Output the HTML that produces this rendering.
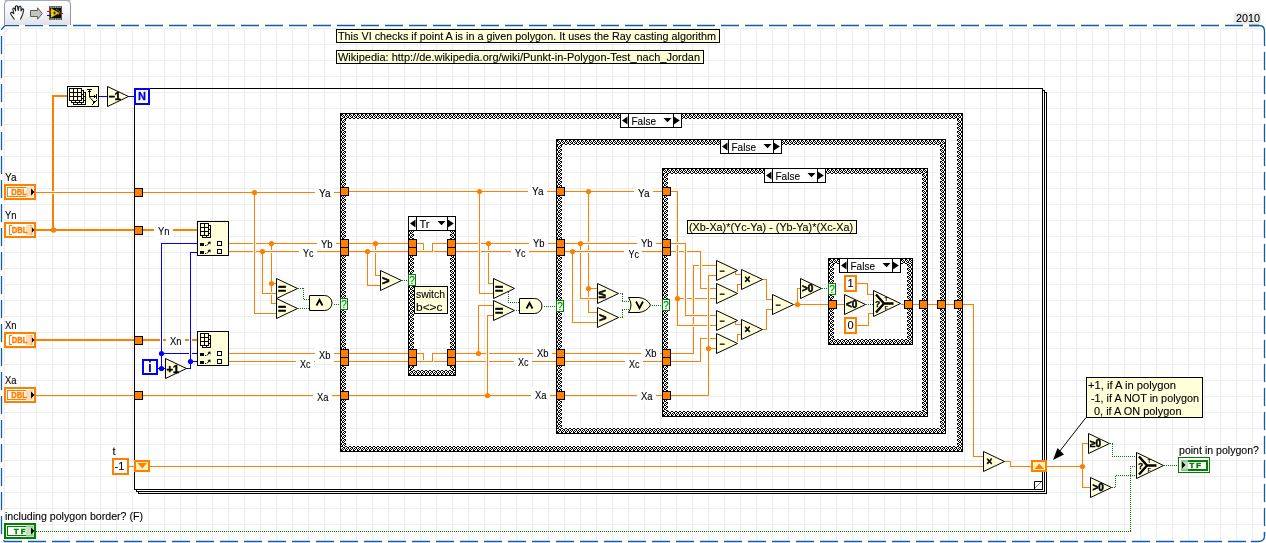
<!DOCTYPE html>
<html lang="en"><head><meta charset="utf-8"><title>Point in polygon - block diagram</title>
<style>html,body{margin:0;padding:0;background:#fff;overflow:hidden}svg{display:block;will-change:transform}</style></head>
<body>
<svg width="1266" height="543" viewBox="0 0 1266 543" shape-rendering="crispEdges" font-family="'Liberation Sans', sans-serif" style="display:block">
<defs>
<pattern id="grid" x="4" y="12" width="16" height="16" patternUnits="userSpaceOnUse"><rect x="0" y="0" width="1" height="16" fill="#ededed"/><rect x="0" y="0" width="16" height="1" fill="#ededed"/></pattern>
<pattern id="chk" x="0" y="0" width="4" height="4" patternUnits="userSpaceOnUse"><rect width="4" height="4" fill="#fff"/><rect x="0" y="0" width="1" height="1" fill="#000"/><rect x="2" y="0" width="1" height="1" fill="#000"/><rect x="1" y="1" width="1" height="1" fill="#000"/><rect x="3" y="1" width="1" height="1" fill="#000"/><rect x="0" y="2" width="1" height="1" fill="#000"/><rect x="2" y="2" width="1" height="1" fill="#000"/><rect x="1" y="3" width="1" height="1" fill="#000"/><rect x="3" y="3" width="1" height="1" fill="#000"/></pattern>
<pattern id="pt" x="0" y="0" width="4" height="5" patternUnits="userSpaceOnUse"><rect width="4" height="5" fill="#fff"/><rect x="0" y="0" width="1" height="1" fill="#000"/><rect x="1" y="0" width="1" height="1" fill="#000"/><rect x="0" y="1" width="1" height="1" fill="#000"/><rect x="2" y="1" width="1" height="1" fill="#000"/><rect x="1" y="2" width="1" height="1" fill="#000"/><rect x="3" y="2" width="1" height="1" fill="#000"/><rect x="2" y="3" width="1" height="1" fill="#000"/><rect x="3" y="3" width="1" height="1" fill="#000"/><rect x="0" y="4" width="1" height="1" fill="#000"/><rect x="1" y="4" width="1" height="1" fill="#000"/></pattern>
<pattern id="pb" x="0" y="0" width="4" height="5" patternUnits="userSpaceOnUse"><rect width="4" height="5" fill="#fff"/><rect x="0" y="0" width="1" height="1" fill="#000"/><rect x="1" y="0" width="1" height="1" fill="#000"/><rect x="2" y="1" width="1" height="1" fill="#000"/><rect x="3" y="1" width="1" height="1" fill="#000"/><rect x="1" y="2" width="1" height="1" fill="#000"/><rect x="3" y="2" width="1" height="1" fill="#000"/><rect x="0" y="3" width="1" height="1" fill="#000"/><rect x="2" y="3" width="1" height="1" fill="#000"/><rect x="0" y="4" width="1" height="1" fill="#000"/><rect x="1" y="4" width="1" height="1" fill="#000"/></pattern>
<pattern id="pl" x="0" y="0" width="5" height="4" patternUnits="userSpaceOnUse"><rect width="5" height="4" fill="#fff"/><rect x="0" y="0" width="1" height="1" fill="#000"/><rect x="3" y="0" width="1" height="1" fill="#000"/><rect x="4" y="0" width="1" height="1" fill="#000"/><rect x="0" y="1" width="1" height="1" fill="#000"/><rect x="2" y="1" width="1" height="1" fill="#000"/><rect x="4" y="1" width="1" height="1" fill="#000"/><rect x="1" y="2" width="1" height="1" fill="#000"/><rect x="3" y="2" width="1" height="1" fill="#000"/><rect x="1" y="3" width="1" height="1" fill="#000"/><rect x="2" y="3" width="1" height="1" fill="#000"/></pattern>
<pattern id="pr" x="0" y="0" width="5" height="4" patternUnits="userSpaceOnUse"><rect width="5" height="4" fill="#fff"/><rect x="0" y="0" width="1" height="1" fill="#000"/><rect x="1" y="0" width="1" height="1" fill="#000"/><rect x="4" y="0" width="1" height="1" fill="#000"/><rect x="0" y="1" width="1" height="1" fill="#000"/><rect x="2" y="1" width="1" height="1" fill="#000"/><rect x="4" y="1" width="1" height="1" fill="#000"/><rect x="1" y="2" width="1" height="1" fill="#000"/><rect x="3" y="2" width="1" height="1" fill="#000"/><rect x="2" y="3" width="1" height="1" fill="#000"/><rect x="3" y="3" width="1" height="1" fill="#000"/></pattern>
<linearGradient id="tb" x1="0" y1="0" x2="0" y2="1"><stop offset="0" stop-color="#ffffff"/><stop offset="0.5" stop-color="#f6f6f8"/><stop offset="1" stop-color="#dfe1e6"/></linearGradient>
</defs>
<rect x="0" y="0" width="1266" height="543" fill="#fff"/>
<path d="M8,28 H1258 Q1262,28 1262,32 V536 Q1262,540 1258,540 H8 Q4,540 4,536 V32 Z" fill="url(#grid)"/>
<polygon points="4,28 9.5,28 4,33.5" fill="#ececec" shape-rendering="auto"/>
<g stroke="#115da8" stroke-width="1.3" fill="none" shape-rendering="auto">
<path d="M5,25.5 H1259" stroke-dasharray="18,6" stroke-dashoffset="4"/>
<path d="M1.5,36 V535" stroke-dasharray="18,6"/>
<path d="M5,25.5 L1.2,29.8"/>
<path d="M1264.5,52 V536" stroke-dasharray="18,6"/>
<path d="M1249,25.5 H1259 Q1264.5,25.5 1264.5,31 V46"/>
<path d="M4,541.5 H1250" stroke-dasharray="18,6" stroke-dashoffset="0"/>
<path d="M3.4,540.2 L4.8,541.6"/>
<path d="M1264.5,532 V536 Q1264.5,541.5 1258,541.5 H1251"/>
</g>
<g shape-rendering="auto">
<path d="M4.5,25 V5 Q4.5,0.5 9,0.5 H66 Q70.5,0.5 70.5,5 V25" fill="url(#tb)" stroke="#8e98ad" stroke-width="1"/>
<path d="M5,1.2 Q5.5,0 9,0 H66 Q69.5,0 70,1.2" fill="none" stroke="#a9b2c6" stroke-width="1.6"/>
<path d="M14.5,19.5 L11,14.5 Q10,12.6 11.6,12.2 L13.8,13.6 L12.8,9 Q13.4,7.2 14.8,8.6 L15.6,11 L15.4,6.6 Q16.4,5 17.6,6.4 L18.2,10.4 L19,6.6 Q20.2,5.6 21,7 L21,11 L22.4,8.8 Q23.8,8.6 23.6,10.4 L22.6,14.4 L20.4,19.5" fill="#fff" stroke="#1a1a1a" stroke-width="1.1" stroke-linejoin="round"/>
<path d="M30.5,10.5 H37.5 V7.8 L42.3,13.5 L37.5,19.2 V16.5 H30.5 Z" fill="#c4c4c4" stroke="#5a5a5a" stroke-width="1"/>
<rect x="49" y="6" width="13" height="14" fill="#555"/>
<rect x="50" y="8" width="11" height="10" fill="#0a0a0a"/>
<rect x="50.3" y="6.6" width="1.2" height="1" fill="#ddd"/><rect x="50.3" y="18.6" width="1.2" height="1" fill="#ddd"/>
<rect x="52.599999999999994" y="6.6" width="1.2" height="1" fill="#ddd"/><rect x="52.599999999999994" y="18.6" width="1.2" height="1" fill="#ddd"/>
<rect x="54.9" y="6.6" width="1.2" height="1" fill="#ddd"/><rect x="54.9" y="18.6" width="1.2" height="1" fill="#ddd"/>
<rect x="57.199999999999996" y="6.6" width="1.2" height="1" fill="#ddd"/><rect x="57.199999999999996" y="18.6" width="1.2" height="1" fill="#ddd"/>
<rect x="59.5" y="6.6" width="1.2" height="1" fill="#ddd"/><rect x="59.5" y="18.6" width="1.2" height="1" fill="#ddd"/>
<path d="M56,9 L60,12 L58,15" fill="none" stroke="#1b9a1b" stroke-width="1"/>
<polygon points="51,8.6 51,17.4 59,13" fill="#f5d312" stroke="#c9a500" stroke-width="0.6"/>
<rect x="47" y="11" width="4" height="1" fill="#f00"/><rect x="47" y="15" width="4" height="1" fill="#00f"/><rect x="59" y="13" width="4" height="1" fill="#f00"/>
<path d="M54.5,11.5 V14.5 M53,13 H56" stroke="#333" stroke-width="1"/>
</g>
<rect x="1234" y="12" width="27" height="12" rx="2.5" fill="#ececec" shape-rendering="auto"/>
<text x="1236" y="21.8" font-size="11" fill="#000" font-weight="normal" text-anchor="start" textLength="24" lengthAdjust="spacingAndGlyphs"  stroke="#000" stroke-width="0.1">2010</text>
<rect x="336.5" y="29.5" width="383" height="13" fill="#ffffda" stroke="#000" stroke-width="1"/>
<text x="338" y="40" font-size="11" fill="#000" font-weight="normal" text-anchor="start" textLength="378" lengthAdjust="spacingAndGlyphs"  stroke="#000" stroke-width="0.1">This VI checks if point A is in a given polygon. It uses the Ray casting algorithm</text>
<rect x="336.5" y="50.5" width="367" height="13" fill="#ffffda" stroke="#000" stroke-width="1"/>
<text x="338" y="61" font-size="11" fill="#000" font-weight="normal" text-anchor="start" textLength="362" lengthAdjust="spacingAndGlyphs"  stroke="#000" stroke-width="0.1">Wikipedia: http://de.wikipedia.org/wiki/Punkt-in-Polygon-Test_nach_Jordan</text>
<rect x="134" y="88" width="909" height="1" fill="#000" />
<rect x="134" y="88" width="1" height="402" fill="#000" />
<rect x="134" y="489" width="909" height="1" fill="#000" />
<rect x="1042" y="88" width="1" height="402" fill="#000" />
<rect x="136" y="491" width="909" height="1" fill="#000" />
<rect x="1044" y="90" width="1" height="402" fill="#000" />
<rect x="138" y="493" width="909" height="1" fill="#000" />
<rect x="1046" y="92" width="1" height="402" fill="#000" />
<rect x="1043" y="90" width="1" height="1" fill="#000" />
<rect x="1045" y="92" width="1" height="1" fill="#000" />
<rect x="136" y="490" width="1" height="1" fill="#000" />
<rect x="138" y="492" width="1" height="1" fill="#000" />
<polygon points="1034.5,489 1034.5,481.5 1042,481.5" fill="#fff" stroke="#000" stroke-width="1" shape-rendering="auto"/>
<polygon points="1034.5,489 1042,481.5 1042,489" fill="#fff" stroke="none"/>
<g transform="translate(341,114)"><rect x="0" y="0" width="621" height="5" fill="url(#pt)"/></g>
<g transform="translate(341,446)"><rect x="0" y="0" width="621" height="5" fill="url(#pb)"/></g>
<g transform="translate(341,119)"><rect x="0" y="0" width="5" height="327" fill="url(#pl)"/></g>
<g transform="translate(957,119)"><rect x="0" y="0" width="5" height="327" fill="url(#pr)"/></g>
<rect x="340" y="113" width="623" height="1" fill="#000" />
<rect x="340" y="451" width="623" height="1" fill="#000" />
<rect x="340" y="113" width="1" height="339" fill="#000" />
<rect x="962" y="113" width="1" height="339" fill="#000" />
<rect x="620.5" y="113.5" width="61" height="14" fill="#fff" stroke="#000" stroke-width="1"/>
<rect x="628" y="113" width="1" height="15" fill="#000" />
<rect x="673" y="113" width="1" height="15" fill="#000" />
<polygon points="627.5,116.5 627.5,124.5 622,120.5" fill="#000" shape-rendering="auto"/>
<polygon points="673.8,116.5 673.8,124.5 679.8,120.5" fill="#000" shape-rendering="auto"/>
<polygon points="663.5,118.0 671.5,118.0 667.5,122.3" fill="#000" shape-rendering="auto"/>
<text x="631.5" y="124.5" font-size="11" fill="#000" font-weight="normal" text-anchor="start" textLength="24.5" lengthAdjust="spacingAndGlyphs"  stroke="#000" stroke-width="0.1">False</text>
<g transform="translate(557,140)"><rect x="0" y="0" width="388" height="5" fill="url(#pt)"/></g>
<g transform="translate(557,428)"><rect x="0" y="0" width="388" height="5" fill="url(#pb)"/></g>
<g transform="translate(557,145)"><rect x="0" y="0" width="5" height="283" fill="url(#pl)"/></g>
<g transform="translate(940,145)"><rect x="0" y="0" width="5" height="283" fill="url(#pr)"/></g>
<rect x="556" y="139" width="390" height="1" fill="#000" />
<rect x="556" y="433" width="390" height="1" fill="#000" />
<rect x="556" y="139" width="1" height="295" fill="#000" />
<rect x="945" y="139" width="1" height="295" fill="#000" />
<rect x="720.5" y="139.5" width="61" height="14" fill="#fff" stroke="#000" stroke-width="1"/>
<rect x="728" y="139" width="1" height="15" fill="#000" />
<rect x="773" y="139" width="1" height="15" fill="#000" />
<polygon points="727.5,142.5 727.5,150.5 722,146.5" fill="#000" shape-rendering="auto"/>
<polygon points="773.8,142.5 773.8,150.5 779.8,146.5" fill="#000" shape-rendering="auto"/>
<polygon points="763.5,144.0 771.5,144.0 767.5,148.3" fill="#000" shape-rendering="auto"/>
<text x="731.5" y="150.5" font-size="11" fill="#000" font-weight="normal" text-anchor="start" textLength="24.5" lengthAdjust="spacingAndGlyphs"  stroke="#000" stroke-width="0.1">False</text>
<g transform="translate(663,169)"><rect x="0" y="0" width="264" height="5" fill="url(#pt)"/></g>
<g transform="translate(663,411)"><rect x="0" y="0" width="264" height="5" fill="url(#pb)"/></g>
<g transform="translate(663,174)"><rect x="0" y="0" width="5" height="237" fill="url(#pl)"/></g>
<g transform="translate(922,174)"><rect x="0" y="0" width="5" height="237" fill="url(#pr)"/></g>
<rect x="662" y="168" width="266" height="1" fill="#000" />
<rect x="662" y="416" width="266" height="1" fill="#000" />
<rect x="662" y="168" width="1" height="249" fill="#000" />
<rect x="927" y="168" width="1" height="249" fill="#000" />
<rect x="764.5" y="168.5" width="61" height="14" fill="#fff" stroke="#000" stroke-width="1"/>
<rect x="772" y="168" width="1" height="15" fill="#000" />
<rect x="817" y="168" width="1" height="15" fill="#000" />
<polygon points="771.5,171.5 771.5,179.5 766,175.5" fill="#000" shape-rendering="auto"/>
<polygon points="817.8,171.5 817.8,179.5 823.8,175.5" fill="#000" shape-rendering="auto"/>
<polygon points="807.5,173.0 815.5,173.0 811.5,177.3" fill="#000" shape-rendering="auto"/>
<text x="775.5" y="179.5" font-size="11" fill="#000" font-weight="normal" text-anchor="start" textLength="24.5" lengthAdjust="spacingAndGlyphs"  stroke="#000" stroke-width="0.1">False</text>
<g transform="translate(829,259)"><rect x="0" y="0" width="83" height="5" fill="url(#pt)"/></g>
<g transform="translate(829,339)"><rect x="0" y="0" width="83" height="5" fill="url(#pb)"/></g>
<g transform="translate(829,264)"><rect x="0" y="0" width="5" height="75" fill="url(#pl)"/></g>
<g transform="translate(907,264)"><rect x="0" y="0" width="5" height="75" fill="url(#pr)"/></g>
<rect x="828" y="258" width="85" height="1" fill="#000" />
<rect x="828" y="344" width="85" height="1" fill="#000" />
<rect x="828" y="258" width="1" height="87" fill="#000" />
<rect x="912" y="258" width="1" height="87" fill="#000" />
<rect x="839.5" y="258.5" width="61" height="14" fill="#fff" stroke="#000" stroke-width="1"/>
<rect x="847" y="258" width="1" height="15" fill="#000" />
<rect x="892" y="258" width="1" height="15" fill="#000" />
<polygon points="846.5,261.5 846.5,269.5 841,265.5" fill="#000" shape-rendering="auto"/>
<polygon points="892.8,261.5 892.8,269.5 898.8,265.5" fill="#000" shape-rendering="auto"/>
<polygon points="882.5,263.0 890.5,263.0 886.5,267.3" fill="#000" shape-rendering="auto"/>
<text x="850.5" y="269.5" font-size="11" fill="#000" font-weight="normal" text-anchor="start" textLength="24.5" lengthAdjust="spacingAndGlyphs"  stroke="#000" stroke-width="0.1">False</text>
<g transform="translate(409,217)"><rect x="0" y="0" width="46" height="5" fill="url(#pt)"/></g>
<g transform="translate(409,370)"><rect x="0" y="0" width="46" height="5" fill="url(#pb)"/></g>
<g transform="translate(409,222)"><rect x="0" y="0" width="5" height="148" fill="url(#pl)"/></g>
<g transform="translate(450,222)"><rect x="0" y="0" width="5" height="148" fill="url(#pr)"/></g>
<rect x="408" y="216" width="48" height="1" fill="#000" />
<rect x="408" y="375" width="48" height="1" fill="#000" />
<rect x="408" y="216" width="1" height="160" fill="#000" />
<rect x="455" y="216" width="1" height="160" fill="#000" />
<rect x="408.5" y="216.5" width="47" height="14" fill="#fff" stroke="#000" stroke-width="1"/>
<rect x="416" y="216" width="1" height="15" fill="#000" />
<rect x="447" y="216" width="1" height="15" fill="#000" />
<polygon points="415.5,219.5 415.5,227.5 410,223.5" fill="#000" shape-rendering="auto"/>
<polygon points="447.8,219.5 447.8,227.5 453.8,223.5" fill="#000" shape-rendering="auto"/>
<polygon points="437.5,221.0 445.5,221.0 441.5,225.3" fill="#000" shape-rendering="auto"/>
<text x="419.5" y="227.5" font-size="11" fill="#000" font-weight="normal" text-anchor="start"  stroke="#000" stroke-width="0.1">Tr</text>
<rect x="36" y="229" width="98" height="2" fill="#ff8000" />
<rect x="52" y="96" width="2" height="135" fill="#ff8000" />
<rect x="52" y="95" width="15" height="2" fill="#ff8000" />
<rect x="52" y="191" width="2" height="3" fill="#fff" />
<rect x="36" y="192" width="98" height="1" fill="#ff8000" />
<circle cx="53.5" cy="230.0" r="2.8" fill="#ff8000" shape-rendering="auto"/>
<rect x="99" y="96" width="8" height="1" fill="#0000ff" />
<rect x="128" y="96" width="6" height="1" fill="#0000ff" />
<rect x="36" y="339" width="98" height="2" fill="#ff8000" />
<rect x="36" y="395" width="98" height="1" fill="#ff8000" />
<rect x="129" y="466" width="5" height="1" fill="#ff8000" />
<line x1="36" y1="531.5" x2="1131" y2="531.5" stroke="#008000" stroke-width="1" stroke-dasharray="1,1"/>
<line x1="1130.5" y1="466" x2="1130.5" y2="532" stroke="#008000" stroke-width="1" stroke-dasharray="1,1"/>
<line x1="1130" y1="466.5" x2="1136" y2="466.5" stroke="#008000" stroke-width="1" stroke-dasharray="1,1"/>
<rect x="143" y="192" width="197" height="1" fill="#ff8000" />
<rect x="143" y="229" width="54" height="2" fill="#ff8000" />
<rect x="229" y="243" width="111" height="1" fill="#ff8000" />
<rect x="229" y="251" width="111" height="1" fill="#ff8000" />
<rect x="229" y="353" width="111" height="1" fill="#ff8000" />
<rect x="229" y="361" width="111" height="1" fill="#ff8000" />
<rect x="143" y="395" width="197" height="1" fill="#ff8000" />
<rect x="143" y="339" width="17" height="2" fill="#ff8000" />
<rect x="163" y="339" width="4" height="2" fill="#ff8000" />
<rect x="185" y="339" width="4" height="2" fill="#ff8000" />
<rect x="192" y="339" width="5" height="2" fill="#ff8000" />
<rect x="254" y="192" width="1" height="122" fill="#ff8000" />
<rect x="254" y="313" width="22" height="1" fill="#ff8000" />
<circle cx="254.5" cy="192.5" r="2.6" fill="#ff8000" shape-rendering="auto"/>
<rect x="271" y="243" width="1" height="61" fill="#ff8000" />
<rect x="271" y="303" width="5" height="1" fill="#ff8000" />
<rect x="271" y="283" width="5" height="1" fill="#ff8000" />
<circle cx="271.5" cy="243.5" r="2.6" fill="#ff8000" shape-rendering="auto"/>
<circle cx="271.5" cy="283.5" r="2.6" fill="#ff8000" shape-rendering="auto"/>
<rect x="262" y="251" width="1" height="43" fill="#ff8000" />
<rect x="262" y="293" width="14" height="1" fill="#ff8000" />
<circle cx="262.5" cy="251.5" r="2.6" fill="#ff8000" shape-rendering="auto"/>
<rect x="161" y="243" width="1" height="126" fill="#0000ff" />
<rect x="161" y="243" width="36" height="1" fill="#0000ff" />
<rect x="158" y="368" width="7" height="1" fill="#0000ff" />
<rect x="161" y="353" width="28" height="1" fill="#0000ff" />
<rect x="192" y="353" width="5" height="1" fill="#0000ff" />
<rect x="190" y="252" width="1" height="117" fill="#0000ff" />
<rect x="186" y="368" width="5" height="1" fill="#0000ff" />
<rect x="190" y="252" width="7" height="1" fill="#0000ff" />
<rect x="190" y="361" width="7" height="1" fill="#0000ff" />
<circle cx="161.5" cy="353.5" r="2.6" fill="#0000ff" shape-rendering="auto"/>
<circle cx="161.5" cy="368.5" r="2.6" fill="#0000ff" shape-rendering="auto"/>
<circle cx="190.5" cy="361.5" r="2.6" fill="#0000ff" shape-rendering="auto"/>
<rect x="150" y="466" width="833" height="1" fill="#ff8000" />
<rect x="349" y="191" width="207" height="1" fill="#ff8000" />
<rect x="479" y="191" width="1" height="103" fill="#ff8000" />
<rect x="479" y="293" width="14" height="1" fill="#ff8000" />
<circle cx="479.5" cy="191.5" r="2.6" fill="#ff8000" shape-rendering="auto"/>
<rect x="349" y="243" width="59" height="1" fill="#ff8000" />
<rect x="349" y="251" width="59" height="1" fill="#ff8000" />
<rect x="375" y="243" width="1" height="33" fill="#ff8000" />
<rect x="375" y="275" width="5" height="1" fill="#ff8000" />
<circle cx="375.5" cy="243.5" r="2.6" fill="#ff8000" shape-rendering="auto"/>
<rect x="367" y="251" width="1" height="35" fill="#ff8000" />
<rect x="367" y="285" width="13" height="1" fill="#ff8000" />
<circle cx="367.5" cy="251.5" r="2.6" fill="#ff8000" shape-rendering="auto"/>
<rect x="417" y="243" width="7" height="1" fill="#ff8000" />
<rect x="423" y="243" width="1" height="7" fill="#ff8000" />
<rect x="434" y="251" width="13" height="1" fill="#ff8000" />
<rect x="417" y="251" width="16" height="1" fill="#ff8000" />
<rect x="432" y="243" width="1" height="9" fill="#ff8000" />
<rect x="432" y="243" width="15" height="1" fill="#ff8000" />
<rect x="417" y="353" width="7" height="1" fill="#ff8000" />
<rect x="423" y="353" width="1" height="7" fill="#ff8000" />
<rect x="434" y="361" width="13" height="1" fill="#ff8000" />
<rect x="417" y="361" width="16" height="1" fill="#ff8000" />
<rect x="432" y="353" width="1" height="9" fill="#ff8000" />
<rect x="432" y="353" width="15" height="1" fill="#ff8000" />
<rect x="456" y="243" width="100" height="1" fill="#ff8000" />
<rect x="456" y="251" width="100" height="1" fill="#ff8000" />
<rect x="488" y="243" width="1" height="41" fill="#ff8000" />
<rect x="488" y="283" width="5" height="1" fill="#ff8000" />
<circle cx="488.5" cy="243.5" r="2.6" fill="#ff8000" shape-rendering="auto"/>
<rect x="349" y="353" width="59" height="1" fill="#ff8000" />
<rect x="349" y="361" width="59" height="1" fill="#ff8000" />
<rect x="456" y="353" width="100" height="1" fill="#ff8000" />
<rect x="456" y="361" width="100" height="1" fill="#ff8000" />
<rect x="478" y="305" width="1" height="49" fill="#ff8000" />
<rect x="478" y="305" width="15" height="1" fill="#ff8000" />
<circle cx="478.5" cy="353.5" r="2.6" fill="#ff8000" shape-rendering="auto"/>
<rect x="349" y="395" width="207" height="1" fill="#ff8000" />
<rect x="487" y="315" width="1" height="81" fill="#ff8000" />
<rect x="487" y="315" width="6" height="1" fill="#ff8000" />
<circle cx="487.5" cy="395.5" r="2.6" fill="#ff8000" shape-rendering="auto"/>
<rect x="565" y="191" width="97" height="1" fill="#ff8000" />
<rect x="588" y="191" width="1" height="122" fill="#ff8000" />
<rect x="588" y="312" width="9" height="1" fill="#ff8000" />
<rect x="588" y="288" width="9" height="1" fill="#ff8000" />
<circle cx="588.5" cy="191.5" r="2.6" fill="#ff8000" shape-rendering="auto"/>
<circle cx="588.5" cy="288.5" r="2.6" fill="#ff8000" shape-rendering="auto"/>
<rect x="565" y="243" width="97" height="1" fill="#ff8000" />
<rect x="565" y="251" width="97" height="1" fill="#ff8000" />
<rect x="580" y="243" width="1" height="56" fill="#ff8000" />
<rect x="580" y="298" width="17" height="1" fill="#ff8000" />
<circle cx="580.5" cy="243.5" r="2.6" fill="#ff8000" shape-rendering="auto"/>
<rect x="572" y="251" width="1" height="72" fill="#ff8000" />
<rect x="572" y="322" width="25" height="1" fill="#ff8000" />
<circle cx="572.5" cy="251.5" r="2.6" fill="#ff8000" shape-rendering="auto"/>
<rect x="565" y="353" width="97" height="1" fill="#ff8000" />
<rect x="565" y="361" width="97" height="1" fill="#ff8000" />
<rect x="565" y="395" width="97" height="1" fill="#ff8000" />
<rect x="671" y="191" width="7" height="1" fill="#ff8000" />
<rect x="677" y="191" width="1" height="135" fill="#ff8000" />
<rect x="677" y="325" width="39" height="1" fill="#ff8000" />
<rect x="677" y="298" width="39" height="1" fill="#ff8000" />
<circle cx="677.5" cy="298.5" r="2.6" fill="#ff8000" shape-rendering="auto"/>
<rect x="671" y="243" width="15" height="1" fill="#ff8000" />
<rect x="685" y="243" width="1" height="73" fill="#ff8000" />
<rect x="685" y="315" width="31" height="1" fill="#ff8000" />
<rect x="671" y="251" width="30" height="1" fill="#ff8000" />
<rect x="700" y="251" width="1" height="38" fill="#ff8000" />
<rect x="700" y="288" width="16" height="1" fill="#ff8000" />
<rect x="671" y="353" width="23" height="1" fill="#ff8000" />
<rect x="693" y="265" width="1" height="89" fill="#ff8000" />
<rect x="693" y="265" width="23" height="1" fill="#ff8000" />
<rect x="671" y="361" width="30" height="1" fill="#ff8000" />
<rect x="700" y="338" width="1" height="24" fill="#ff8000" />
<rect x="700" y="338" width="16" height="1" fill="#ff8000" />
<rect x="671" y="395" width="38" height="1" fill="#ff8000" />
<rect x="708" y="275" width="1" height="121" fill="#ff8000" />
<rect x="708" y="275" width="8" height="1" fill="#ff8000" />
<rect x="708" y="348" width="8" height="1" fill="#ff8000" />
<circle cx="708.5" cy="348.5" r="2.6" fill="#ff8000" shape-rendering="auto"/>
<rect x="735" y="271" width="1" height="4" fill="#ff8000" />
<rect x="735" y="274" width="6" height="1" fill="#ff8000" />
<rect x="737" y="284" width="1" height="8" fill="#ff8000" />
<rect x="737" y="284" width="4" height="1" fill="#ff8000" />
<rect x="735" y="322" width="1" height="3" fill="#ff8000" />
<rect x="735" y="324" width="6" height="1" fill="#ff8000" />
<rect x="737" y="334" width="1" height="8" fill="#ff8000" />
<rect x="737" y="334" width="4" height="1" fill="#ff8000" />
<rect x="763" y="279" width="4" height="1" fill="#ff8000" />
<rect x="766" y="279" width="1" height="21" fill="#ff8000" />
<rect x="766" y="299" width="6" height="1" fill="#ff8000" />
<rect x="763" y="329" width="4" height="1" fill="#ff8000" />
<rect x="766" y="309" width="1" height="21" fill="#ff8000" />
<rect x="766" y="309" width="6" height="1" fill="#ff8000" />
<rect x="794" y="304" width="35" height="1" fill="#ff8000" />
<rect x="797" y="288" width="1" height="17" fill="#ff8000" />
<rect x="797" y="288" width="3" height="1" fill="#ff8000" />
<circle cx="797.5" cy="304.5" r="2.6" fill="#ff8000" shape-rendering="auto"/>
<line x1="822" y1="288.5" x2="828" y2="288.5" stroke="#008000" stroke-width="1" stroke-dasharray="1,1"/>
<rect x="837" y="304" width="7" height="1" fill="#ff8000" />
<line x1="866" y1="304.5" x2="873" y2="304.5" stroke="#008000" stroke-width="1" stroke-dasharray="1,1"/>
<rect x="857" y="283" width="11" height="1" fill="#ff8000" />
<rect x="867" y="283" width="1" height="12" fill="#ff8000" />
<rect x="867" y="294" width="6" height="1" fill="#ff8000" />
<rect x="857" y="325" width="12" height="1" fill="#ff8000" />
<rect x="868" y="313" width="1" height="13" fill="#ff8000" />
<rect x="868" y="313" width="5" height="1" fill="#ff8000" />
<rect x="901" y="304" width="3" height="1" fill="#ff8000" />
<rect x="913" y="304" width="61" height="1" fill="#ff8000" />
<rect x="973" y="304" width="1" height="153" fill="#ff8000" />
<rect x="973" y="456" width="10" height="1" fill="#ff8000" />
<rect x="1005" y="461" width="6" height="1" fill="#ff8000" />
<rect x="1010" y="461" width="1" height="6" fill="#ff8000" />
<rect x="1010" y="466" width="21" height="1" fill="#ff8000" />
<rect x="1047" y="466" width="36" height="1" fill="#ff8000" />
<rect x="1082" y="443" width="6" height="1" fill="#ff8000" />
<rect x="1082" y="443" width="1" height="45" fill="#ff8000" />
<rect x="1082" y="487" width="8" height="1" fill="#ff8000" />
<circle cx="1082.5" cy="466.5" r="2.6" fill="#ff8000" shape-rendering="auto"/>
<line x1="1110" y1="443.5" x2="1113" y2="443.5" stroke="#008000" stroke-width="1" stroke-dasharray="1,1"/>
<line x1="1112.5" y1="444" x2="1112.5" y2="457" stroke="#008000" stroke-width="1" stroke-dasharray="1,1"/>
<line x1="1112" y1="456.5" x2="1136" y2="456.5" stroke="#008000" stroke-width="1" stroke-dasharray="1,1"/>
<line x1="1112" y1="487.5" x2="1116" y2="487.5" stroke="#008000" stroke-width="1" stroke-dasharray="1,1"/>
<line x1="1115.5" y1="476" x2="1115.5" y2="488" stroke="#008000" stroke-width="1" stroke-dasharray="1,1"/>
<line x1="1116" y1="475.5" x2="1136" y2="475.5" stroke="#008000" stroke-width="1" stroke-dasharray="1,1"/>
<line x1="1164" y1="465.5" x2="1178" y2="465.5" stroke="#008000" stroke-width="1" stroke-dasharray="1,1"/>
<line x1="298" y1="288.5" x2="304" y2="288.5" stroke="#008000" stroke-width="1" stroke-dasharray="1,1"/>
<line x1="303.5" y1="288" x2="303.5" y2="300" stroke="#008000" stroke-width="1" stroke-dasharray="1,1"/>
<line x1="304" y1="299.5" x2="309" y2="299.5" stroke="#008000" stroke-width="1" stroke-dasharray="1,1"/>
<line x1="298" y1="308.5" x2="309" y2="308.5" stroke="#008000" stroke-width="1" stroke-dasharray="1,1"/>
<line x1="334" y1="304.5" x2="340" y2="304.5" stroke="#008000" stroke-width="1" stroke-dasharray="1,1"/>
<line x1="402" y1="280.5" x2="408" y2="280.5" stroke="#008000" stroke-width="1" stroke-dasharray="1,1"/>
<line x1="508.5" y1="292" x2="508.5" y2="303" stroke="#008000" stroke-width="1" stroke-dasharray="1,1"/>
<line x1="508" y1="302.5" x2="519" y2="302.5" stroke="#008000" stroke-width="1" stroke-dasharray="1,1"/>
<line x1="516" y1="310.5" x2="519" y2="310.5" stroke="#008000" stroke-width="1" stroke-dasharray="1,1"/>
<line x1="544" y1="306.5" x2="556" y2="306.5" stroke="#008000" stroke-width="1" stroke-dasharray="1,1"/>
<line x1="620" y1="293.5" x2="623" y2="293.5" stroke="#008000" stroke-width="1" stroke-dasharray="1,1"/>
<line x1="622.5" y1="294" x2="622.5" y2="302" stroke="#008000" stroke-width="1" stroke-dasharray="1,1"/>
<line x1="622" y1="301.5" x2="632" y2="301.5" stroke="#008000" stroke-width="1" stroke-dasharray="1,1"/>
<line x1="620" y1="317.5" x2="623" y2="317.5" stroke="#008000" stroke-width="1" stroke-dasharray="1,1"/>
<line x1="622.5" y1="310" x2="622.5" y2="318" stroke="#008000" stroke-width="1" stroke-dasharray="1,1"/>
<line x1="622" y1="309.5" x2="632" y2="309.5" stroke="#008000" stroke-width="1" stroke-dasharray="1,1"/>
<line x1="652" y1="305.5" x2="662" y2="305.5" stroke="#008000" stroke-width="1" stroke-dasharray="1,1"/>
<rect x="271" y="250" width="1" height="1" fill="#fff" />
<rect x="271" y="252" width="1" height="1" fill="#fff" />
<rect x="271" y="292" width="1" height="1" fill="#fff" />
<rect x="271" y="294" width="1" height="1" fill="#fff" />
<rect x="488" y="250" width="1" height="1" fill="#fff" />
<rect x="488" y="252" width="1" height="1" fill="#fff" />
<rect x="375" y="250" width="1" height="1" fill="#fff" />
<rect x="375" y="252" width="1" height="1" fill="#fff" />
<rect x="588" y="242" width="1" height="1" fill="#fff" />
<rect x="588" y="244" width="1" height="1" fill="#fff" />
<rect x="588" y="250" width="1" height="1" fill="#fff" />
<rect x="588" y="252" width="1" height="1" fill="#fff" />
<rect x="580" y="250" width="1" height="1" fill="#fff" />
<rect x="580" y="252" width="1" height="1" fill="#fff" />
<rect x="588" y="297" width="1" height="1" fill="#fff" />
<rect x="588" y="299" width="1" height="1" fill="#fff" />
<rect x="677" y="242" width="1" height="1" fill="#fff" />
<rect x="677" y="244" width="1" height="1" fill="#fff" />
<rect x="693" y="314" width="1" height="1" fill="#fff" />
<rect x="693" y="316" width="1" height="1" fill="#fff" />
<rect x="693" y="324" width="1" height="1" fill="#fff" />
<rect x="693" y="326" width="1" height="1" fill="#fff" />
<rect x="253" y="243" width="1" height="1" fill="#fff" />
<rect x="255" y="243" width="1" height="1" fill="#fff" />
<rect x="253" y="251" width="1" height="1" fill="#fff" />
<rect x="255" y="251" width="1" height="1" fill="#fff" />
<rect x="478" y="243" width="1" height="1" fill="#fff" />
<rect x="480" y="243" width="1" height="1" fill="#fff" />
<rect x="478" y="251" width="1" height="1" fill="#fff" />
<rect x="480" y="251" width="1" height="1" fill="#fff" />
<rect x="486" y="353" width="1" height="1" fill="#fff" />
<rect x="488" y="353" width="1" height="1" fill="#fff" />
<rect x="486" y="361" width="1" height="1" fill="#fff" />
<rect x="488" y="361" width="1" height="1" fill="#fff" />
<rect x="676" y="251" width="1" height="1" fill="#fff" />
<rect x="678" y="251" width="1" height="1" fill="#fff" />
<rect x="684" y="251" width="1" height="1" fill="#fff" />
<rect x="686" y="251" width="1" height="1" fill="#fff" />
<rect x="699" y="265" width="1" height="1" fill="#fff" />
<rect x="701" y="265" width="1" height="1" fill="#fff" />
<rect x="707" y="288" width="1" height="1" fill="#fff" />
<rect x="709" y="288" width="1" height="1" fill="#fff" />
<rect x="684" y="298" width="1" height="1" fill="#fff" />
<rect x="686" y="298" width="1" height="1" fill="#fff" />
<rect x="692" y="298" width="1" height="1" fill="#fff" />
<rect x="694" y="298" width="1" height="1" fill="#fff" />
<rect x="707" y="298" width="1" height="1" fill="#fff" />
<rect x="709" y="298" width="1" height="1" fill="#fff" />
<rect x="707" y="315" width="1" height="1" fill="#fff" />
<rect x="709" y="315" width="1" height="1" fill="#fff" />
<rect x="707" y="325" width="1" height="1" fill="#fff" />
<rect x="709" y="325" width="1" height="1" fill="#fff" />
<rect x="707" y="338" width="1" height="1" fill="#fff" />
<rect x="709" y="338" width="1" height="1" fill="#fff" />
<rect x="315" y="186" width="19" height="14" fill="#fff" />
<text x="319" y="197" font-size="11" fill="#000" font-weight="normal" text-anchor="start" textLength="11.5" lengthAdjust="spacingAndGlyphs"  stroke="#000" stroke-width="0.1">Ya</text>
<rect x="154" y="224" width="19" height="14" fill="#fff" />
<text x="158" y="235" font-size="11" fill="#000" font-weight="normal" text-anchor="start" textLength="11.5" lengthAdjust="spacingAndGlyphs"  stroke="#000" stroke-width="0.1">Yn</text>
<rect x="317" y="237" width="19" height="14" fill="#fff" />
<text x="321" y="248" font-size="11" fill="#000" font-weight="normal" text-anchor="start" textLength="11.5" lengthAdjust="spacingAndGlyphs"  stroke="#000" stroke-width="0.1">Yb</text>
<rect x="299" y="246" width="18" height="14" fill="#fff" />
<text x="303" y="257" font-size="11" fill="#000" font-weight="normal" text-anchor="start" textLength="10.5" lengthAdjust="spacingAndGlyphs"  stroke="#000" stroke-width="0.1">Yc</text>
<rect x="315" y="348" width="19" height="14" fill="#fff" />
<text x="319" y="359" font-size="11" fill="#000" font-weight="normal" text-anchor="start" textLength="11.5" lengthAdjust="spacingAndGlyphs"  stroke="#000" stroke-width="0.1">Xb</text>
<rect x="296" y="357" width="18" height="14" fill="#fff" />
<text x="300" y="368" font-size="11" fill="#000" font-weight="normal" text-anchor="start" textLength="10.5" lengthAdjust="spacingAndGlyphs"  stroke="#000" stroke-width="0.1">Xc</text>
<rect x="313" y="390" width="19" height="14" fill="#fff" />
<text x="317" y="401" font-size="11" fill="#000" font-weight="normal" text-anchor="start" textLength="11.5" lengthAdjust="spacingAndGlyphs"  stroke="#000" stroke-width="0.1">Xa</text>
<rect x="166" y="334" width="19" height="14" fill="#fff" />
<text x="170" y="345" font-size="11" fill="#000" font-weight="normal" text-anchor="start" textLength="11.5" lengthAdjust="spacingAndGlyphs"  stroke="#000" stroke-width="0.1">Xn</text>
<rect x="528" y="184" width="19" height="14" fill="#fff" />
<text x="532" y="195" font-size="11" fill="#000" font-weight="normal" text-anchor="start" textLength="11.5" lengthAdjust="spacingAndGlyphs"  stroke="#000" stroke-width="0.1">Ya</text>
<rect x="529" y="236" width="19" height="14" fill="#fff" />
<text x="533" y="247" font-size="11" fill="#000" font-weight="normal" text-anchor="start" textLength="11.5" lengthAdjust="spacingAndGlyphs"  stroke="#000" stroke-width="0.1">Yb</text>
<rect x="511" y="246" width="18" height="14" fill="#fff" />
<text x="515" y="257" font-size="11" fill="#000" font-weight="normal" text-anchor="start" textLength="10.5" lengthAdjust="spacingAndGlyphs"  stroke="#000" stroke-width="0.1">Yc</text>
<rect x="533" y="346" width="19" height="14" fill="#fff" />
<text x="537" y="357" font-size="11" fill="#000" font-weight="normal" text-anchor="start" textLength="11.5" lengthAdjust="spacingAndGlyphs"  stroke="#000" stroke-width="0.1">Xb</text>
<rect x="514" y="355" width="18" height="14" fill="#fff" />
<text x="518" y="366" font-size="11" fill="#000" font-weight="normal" text-anchor="start" textLength="10.5" lengthAdjust="spacingAndGlyphs"  stroke="#000" stroke-width="0.1">Xc</text>
<rect x="531" y="388" width="19" height="14" fill="#fff" />
<text x="535" y="399" font-size="11" fill="#000" font-weight="normal" text-anchor="start" textLength="11.5" lengthAdjust="spacingAndGlyphs"  stroke="#000" stroke-width="0.1">Xa</text>
<rect x="634" y="186" width="19" height="14" fill="#fff" />
<text x="638" y="197" font-size="11" fill="#000" font-weight="normal" text-anchor="start" textLength="11.5" lengthAdjust="spacingAndGlyphs"  stroke="#000" stroke-width="0.1">Ya</text>
<rect x="637" y="236" width="19" height="14" fill="#fff" />
<text x="641" y="247" font-size="11" fill="#000" font-weight="normal" text-anchor="start" textLength="11.5" lengthAdjust="spacingAndGlyphs"  stroke="#000" stroke-width="0.1">Yb</text>
<rect x="624" y="246" width="18" height="14" fill="#fff" />
<text x="628.5" y="257.5" font-size="11" fill="#000" font-weight="normal" text-anchor="start" textLength="10.5" lengthAdjust="spacingAndGlyphs"  stroke="#000" stroke-width="0.1">Yc</text>
<rect x="641" y="346" width="19" height="14" fill="#fff" />
<text x="645" y="357" font-size="11" fill="#000" font-weight="normal" text-anchor="start" textLength="11.5" lengthAdjust="spacingAndGlyphs"  stroke="#000" stroke-width="0.1">Xb</text>
<rect x="625" y="357" width="18" height="14" fill="#fff" />
<text x="629" y="368" font-size="11" fill="#000" font-weight="normal" text-anchor="start" textLength="10.5" lengthAdjust="spacingAndGlyphs"  stroke="#000" stroke-width="0.1">Xc</text>
<rect x="637" y="389" width="19" height="14" fill="#fff" />
<text x="641" y="400" font-size="11" fill="#000" font-weight="normal" text-anchor="start" textLength="11.5" lengthAdjust="spacingAndGlyphs"  stroke="#000" stroke-width="0.1">Xa</text>
<rect x="134.5" y="188.5" width="8" height="8" fill="#ff8000" stroke="#000" stroke-width="1"/>
<rect x="134.5" y="226.5" width="8" height="8" fill="#ff8000" stroke="#000" stroke-width="1"/>
<rect x="134.5" y="336.5" width="8" height="8" fill="#ff8000" stroke="#000" stroke-width="1"/>
<rect x="134.5" y="391.5" width="8" height="8" fill="#ff8000" stroke="#000" stroke-width="1"/>
<rect x="340.5" y="187.5" width="8" height="8" fill="#ff8000" stroke="#000" stroke-width="1"/>
<rect x="340.5" y="239.5" width="8" height="8" fill="#ff8000" stroke="#000" stroke-width="1"/>
<rect x="340.5" y="247.5" width="8" height="8" fill="#ff8000" stroke="#000" stroke-width="1"/>
<rect x="340.5" y="349.5" width="8" height="8" fill="#ff8000" stroke="#000" stroke-width="1"/>
<rect x="340.5" y="357.5" width="8" height="8" fill="#ff8000" stroke="#000" stroke-width="1"/>
<rect x="340.5" y="391.5" width="8" height="8" fill="#ff8000" stroke="#000" stroke-width="1"/>
<rect x="556.5" y="187.5" width="8" height="8" fill="#ff8000" stroke="#000" stroke-width="1"/>
<rect x="556.5" y="239.5" width="8" height="8" fill="#ff8000" stroke="#000" stroke-width="1"/>
<rect x="556.5" y="247.5" width="8" height="8" fill="#ff8000" stroke="#000" stroke-width="1"/>
<rect x="556.5" y="349.5" width="8" height="8" fill="#ff8000" stroke="#000" stroke-width="1"/>
<rect x="556.5" y="357.5" width="8" height="8" fill="#ff8000" stroke="#000" stroke-width="1"/>
<rect x="556.5" y="391.5" width="8" height="8" fill="#ff8000" stroke="#000" stroke-width="1"/>
<rect x="662.5" y="187.5" width="8" height="8" fill="#ff8000" stroke="#000" stroke-width="1"/>
<rect x="662.5" y="239.5" width="8" height="8" fill="#ff8000" stroke="#000" stroke-width="1"/>
<rect x="662.5" y="247.5" width="8" height="8" fill="#ff8000" stroke="#000" stroke-width="1"/>
<rect x="662.5" y="349.5" width="8" height="8" fill="#ff8000" stroke="#000" stroke-width="1"/>
<rect x="662.5" y="357.5" width="8" height="8" fill="#ff8000" stroke="#000" stroke-width="1"/>
<rect x="662.5" y="391.5" width="8" height="8" fill="#ff8000" stroke="#000" stroke-width="1"/>
<rect x="408.5" y="239.5" width="8" height="8" fill="#ff8000" stroke="#000" stroke-width="1"/>
<rect x="408.5" y="247.5" width="8" height="8" fill="#ff8000" stroke="#000" stroke-width="1"/>
<rect x="408.5" y="349.5" width="8" height="8" fill="#ff8000" stroke="#000" stroke-width="1"/>
<rect x="408.5" y="357.5" width="8" height="8" fill="#ff8000" stroke="#000" stroke-width="1"/>
<rect x="447.5" y="239.5" width="8" height="8" fill="#ff8000" stroke="#000" stroke-width="1"/>
<rect x="447.5" y="247.5" width="8" height="8" fill="#ff8000" stroke="#000" stroke-width="1"/>
<rect x="447.5" y="349.5" width="8" height="8" fill="#ff8000" stroke="#000" stroke-width="1"/>
<rect x="447.5" y="357.5" width="8" height="8" fill="#ff8000" stroke="#000" stroke-width="1"/>
<rect x="828.5" y="300.5" width="8" height="8" fill="#ff8000" stroke="#000" stroke-width="1"/>
<rect x="904.5" y="300.5" width="8" height="8" fill="#ff8000" stroke="#000" stroke-width="1"/>
<rect x="919.5" y="300.5" width="8" height="8" fill="#ff8000" stroke="#000" stroke-width="1"/>
<rect x="937.5" y="300.5" width="8" height="8" fill="#ff8000" stroke="#000" stroke-width="1"/>
<rect x="954.5" y="300.5" width="8" height="8" fill="#ff8000" stroke="#000" stroke-width="1"/>
<rect x="340.5" y="298.5" width="7" height="11" fill="#f0fff0" stroke="#008000" stroke-width="1"/>
<text x="344" y="308" font-size="10" fill="#008000" font-weight="normal" text-anchor="middle"  stroke="#008000" stroke-width="0.1">?</text>
<rect x="408.5" y="274.5" width="7" height="11" fill="#f0fff0" stroke="#008000" stroke-width="1"/>
<text x="412" y="284" font-size="10" fill="#008000" font-weight="normal" text-anchor="middle"  stroke="#008000" stroke-width="0.1">?</text>
<rect x="556.5" y="300.5" width="7" height="11" fill="#f0fff0" stroke="#008000" stroke-width="1"/>
<text x="560" y="310" font-size="10" fill="#008000" font-weight="normal" text-anchor="middle"  stroke="#008000" stroke-width="0.1">?</text>
<rect x="662.5" y="299.5" width="7" height="11" fill="#f0fff0" stroke="#008000" stroke-width="1"/>
<text x="666" y="309" font-size="10" fill="#008000" font-weight="normal" text-anchor="middle"  stroke="#008000" stroke-width="0.1">?</text>
<rect x="828.5" y="283.5" width="7" height="11" fill="#f0fff0" stroke="#008000" stroke-width="1"/>
<text x="832" y="293" font-size="10" fill="#008000" font-weight="normal" text-anchor="middle"  stroke="#008000" stroke-width="0.1">?</text>
<rect x="135.0" y="89.0" width="14" height="15" fill="#ffffda" stroke="#0000ff" stroke-width="2"/>
<text x="142" y="100" font-size="11" fill="#0000ff" font-weight="bold" text-anchor="middle"  stroke="#0000ff" stroke-width="0.3">N</text>
<rect x="143.0" y="360.0" width="14" height="14" fill="#ffffda" stroke="#0000ff" stroke-width="2"/>
<text x="150" y="371.5" font-size="14" fill="#0000ff" font-weight="bold" text-anchor="middle" >i</text>
<rect x="67.5" y="86.5" width="31" height="20" fill="#ffffda" stroke="#000" stroke-width="1"/>
<g fill="none" stroke="#000" stroke-width="1">
<path d="M73.5,102.5 V104.5 H85.5 V92.5 H83.5 M77.5,102.5 V104.5 M81.5,102.5 V104.5 M83.5,96.5 H85.5 M83.5,100.5 H85.5"/>
<path d="M71.5,100.5 V102.5 H83.5 V90.5 H81.5 M75.5,100.5 V102.5 M79.5,100.5 V102.5 M81.5,94.5 H83.5 M81.5,98.5 H83.5"/>
<rect x="69.5" y="88.5" width="12" height="12" fill="#ffffda"/>
<path d="M73.5,88.5 V100.5 M77.5,88.5 V100.5 M69.5,92.5 H81.5 M69.5,96.5 H81.5"/>
<path d="M87,89.5 H92 M88,91.5 H91 M89.5,89.5 V97 M89.5,96.5 H97 M96.5,94 V99 M94.5,95 V98"/>
<path d="M89.5,97 L93.5,101.5 M97,100 L92,105" shape-rendering="auto"/>
</g>
<rect x="93" y="101" width="2" height="2" fill="#000" />
<polygon points="107.5,86.5 107.5,106.5 128.5,96.5" fill="#ffffda" stroke="#000" stroke-width="1" shape-rendering="auto"/>
<text x="108.5" y="99.8" font-size="10.5" fill="#000" font-weight="bold" text-anchor="start"  stroke="#000" stroke-width="0.6">−1</text>
<rect x="197.5" y="221.5" width="31" height="34" fill="#ffffda" stroke="#000" stroke-width="1"/>
<g fill="none" stroke="#000" stroke-width="1">
<path d="M202.5,235.5 V237.5 H210.5 V225.5 H208.5 M206.5,235.5 V237.5 M208.5,229.5 H210.5 M208.5,233.5 H210.5"/>
<rect x="200.5" y="223.5" width="8" height="12" fill="#ffffda"/>
<path d="M204.5,223.5 V235.5 M200.5,227.5 H208.5 M200.5,231.5 H208.5"/>
</g>
<rect x="200" y="243" width="4" height="3" fill="#000" />
<rect x="205" y="245" width="1" height="1" fill="#000" />
<path d="M207,245.5 L209.5,242.5" stroke="#000" fill="none" shape-rendering="auto"/>
<polygon points="207.5,242 210.5,241.5 210.5,244.5" fill="#000" shape-rendering="auto"/>
<rect x="217.5" y="241.5" width="4" height="4" fill="#fff" stroke="#000" stroke-width="1"/>
<rect x="200" y="251" width="4" height="3" fill="#000" />
<rect x="205" y="253" width="1" height="1" fill="#000" />
<path d="M207,253.5 L209.5,250.5" stroke="#000" fill="none" shape-rendering="auto"/>
<polygon points="207.5,250 210.5,249.5 210.5,252.5" fill="#000" shape-rendering="auto"/>
<rect x="217.5" y="249.5" width="4" height="4" fill="#fff" stroke="#000" stroke-width="1"/>
<rect x="197.5" y="331.5" width="31" height="34" fill="#ffffda" stroke="#000" stroke-width="1"/>
<g fill="none" stroke="#000" stroke-width="1">
<path d="M202.5,345.5 V347.5 H210.5 V335.5 H208.5 M206.5,345.5 V347.5 M208.5,339.5 H210.5 M208.5,343.5 H210.5"/>
<rect x="200.5" y="333.5" width="8" height="12" fill="#ffffda"/>
<path d="M204.5,333.5 V345.5 M200.5,337.5 H208.5 M200.5,341.5 H208.5"/>
</g>
<rect x="200" y="353" width="4" height="3" fill="#000" />
<rect x="205" y="355" width="1" height="1" fill="#000" />
<path d="M207,355.5 L209.5,352.5" stroke="#000" fill="none" shape-rendering="auto"/>
<polygon points="207.5,352 210.5,351.5 210.5,354.5" fill="#000" shape-rendering="auto"/>
<rect x="217.5" y="351.5" width="4" height="4" fill="#fff" stroke="#000" stroke-width="1"/>
<rect x="200" y="361" width="4" height="3" fill="#000" />
<rect x="205" y="363" width="1" height="1" fill="#000" />
<path d="M207,363.5 L209.5,360.5" stroke="#000" fill="none" shape-rendering="auto"/>
<polygon points="207.5,360 210.5,359.5 210.5,362.5" fill="#000" shape-rendering="auto"/>
<rect x="217.5" y="359.5" width="4" height="4" fill="#fff" stroke="#000" stroke-width="1"/>
<polygon points="165.5,358.5 165.5,378.5 186.5,368.5" fill="#ffffda" stroke="#000" stroke-width="1" shape-rendering="auto"/>
<text x="166.5" y="372.5" font-size="11" fill="#000" font-weight="bold" text-anchor="start"  stroke="#000" stroke-width="0.5">+1</text>
<polygon points="276.5,278.5 276.5,298.5 297.5,288.5" fill="#ffffda" stroke="#000" stroke-width="1" shape-rendering="auto"/>
<text x="278" y="293.5" font-size="14" fill="#000" font-weight="bold" text-anchor="start"  stroke="#000" stroke-width="0.5">=</text>
<polygon points="276.5,298.5 276.5,318.5 297.5,308.5" fill="#ffffda" stroke="#000" stroke-width="1" shape-rendering="auto"/>
<text x="278" y="313.5" font-size="14" fill="#000" font-weight="bold" text-anchor="start"  stroke="#000" stroke-width="0.5">=</text>
<polygon points="493.5,278.5 493.5,298.5 514.5,288.5" fill="#ffffda" stroke="#000" stroke-width="1" shape-rendering="auto"/>
<text x="495" y="293.5" font-size="14" fill="#000" font-weight="bold" text-anchor="start"  stroke="#000" stroke-width="0.5">=</text>
<polygon points="493.5,300.5 493.5,320.5 514.5,310.5" fill="#ffffda" stroke="#000" stroke-width="1" shape-rendering="auto"/>
<text x="495" y="315.5" font-size="14" fill="#000" font-weight="bold" text-anchor="start"  stroke="#000" stroke-width="0.5">=</text>
<polygon points="380.5,270.5 380.5,290.5 401.5,280.5" fill="#ffffda" stroke="#000" stroke-width="1" shape-rendering="auto"/>
<text x="382" y="285.0" font-size="13" fill="#000" font-weight="bold" text-anchor="start"  stroke="#000" stroke-width="0.5">&gt;</text>
<polygon points="597.5,283.5 597.5,303.5 618.5,293.5" fill="#ffffda" stroke="#000" stroke-width="1" shape-rendering="auto"/>
<text x="598.5" y="298.0" font-size="13" fill="#000" font-weight="bold" text-anchor="start"  stroke="#000" stroke-width="0.5">≤</text>
<polygon points="597.5,307.5 597.5,327.5 618.5,317.5" fill="#ffffda" stroke="#000" stroke-width="1" shape-rendering="auto"/>
<text x="599" y="322.0" font-size="13" fill="#000" font-weight="bold" text-anchor="start"  stroke="#000" stroke-width="0.5">&gt;</text>
<path d="M309.5,295.5 H324.5 A7.5,7.5 0 0 1 324.5,310.5 H309.5 Z" fill="#ffffda" stroke="#000" shape-rendering="auto"/>
<path d="M316.5,305.5 L319.5,300 L322.5,305.5" fill="none" stroke="#000" stroke-width="1.8" shape-rendering="auto"/>
<path d="M519.5,298.5 H534.5 A7.5,7.5 0 0 1 534.5,313.5 H519.5 Z" fill="#ffffda" stroke="#000" shape-rendering="auto"/>
<path d="M526.5,308.5 L529.5,303 L532.5,308.5" fill="none" stroke="#000" stroke-width="1.8" shape-rendering="auto"/>
<path d="M628.5,297.5 H639 Q647,298.5 650.5,305 Q647,311.5 639,312.5 H628.5 Q633.5,305 628.5,297.5 Z" fill="#ffffda" stroke="#000" shape-rendering="auto"/>
<path d="M636,301.5 L639.5,308 L643,301.5" fill="none" stroke="#000" stroke-width="1.8" shape-rendering="auto"/>
<rect x="414.5" y="286.5" width="33" height="27" fill="#ffffda" stroke="#000" stroke-width="1"/>
<text x="416" y="298" font-size="11" fill="#000" font-weight="normal" text-anchor="start" textLength="29" lengthAdjust="spacingAndGlyphs"  stroke="#000" stroke-width="0.1">switch</text>
<text x="416" y="311" font-size="11" fill="#000" font-weight="normal" text-anchor="start" textLength="26.5" lengthAdjust="spacingAndGlyphs"  stroke="#000" stroke-width="0.1">b&lt;&gt;c</text>
<rect x="687.5" y="220.5" width="169" height="13" fill="#ffffda" stroke="#000" stroke-width="1"/>
<text x="689" y="231" font-size="11" fill="#000" font-weight="normal" text-anchor="start" textLength="164" lengthAdjust="spacingAndGlyphs"  stroke="#000" stroke-width="0.1">(Xb-Xa)*(Yc-Ya) - (Yb-Ya)*(Xc-Xa)</text>
<polygon points="716.5,260.5 716.5,280.5 737.5,270.5" fill="#ffffda" stroke="#000" stroke-width="1" shape-rendering="auto"/>
<text x="719.5" y="273.5" font-size="9" fill="#000" font-weight="bold" text-anchor="start"  stroke="#000" stroke-width="0.25">−</text>
<polygon points="716.5,283.5 716.5,303.5 737.5,293.5" fill="#ffffda" stroke="#000" stroke-width="1" shape-rendering="auto"/>
<text x="719.5" y="296.5" font-size="9" fill="#000" font-weight="bold" text-anchor="start"  stroke="#000" stroke-width="0.25">−</text>
<polygon points="716.5,310.5 716.5,330.5 737.5,320.5" fill="#ffffda" stroke="#000" stroke-width="1" shape-rendering="auto"/>
<text x="719.5" y="323.5" font-size="9" fill="#000" font-weight="bold" text-anchor="start"  stroke="#000" stroke-width="0.25">−</text>
<polygon points="716.5,333.5 716.5,353.5 737.5,343.5" fill="#ffffda" stroke="#000" stroke-width="1" shape-rendering="auto"/>
<text x="719.5" y="346.5" font-size="9" fill="#000" font-weight="bold" text-anchor="start"  stroke="#000" stroke-width="0.25">−</text>
<polygon points="741.5,269.5 741.5,289.5 762.5,279.5" fill="#ffffda" stroke="#000" stroke-width="1" shape-rendering="auto"/>
<text x="744.5" y="283.0" font-size="10" fill="#000" font-weight="bold" text-anchor="start"  stroke="#000" stroke-width="0.5">×</text>
<polygon points="741.5,319.5 741.5,339.5 762.5,329.5" fill="#ffffda" stroke="#000" stroke-width="1" shape-rendering="auto"/>
<text x="744.5" y="333.0" font-size="10" fill="#000" font-weight="bold" text-anchor="start"  stroke="#000" stroke-width="0.5">×</text>
<polygon points="772.5,294.5 772.5,314.5 793.5,304.5" fill="#ffffda" stroke="#000" stroke-width="1" shape-rendering="auto"/>
<text x="775.5" y="307.5" font-size="9" fill="#000" font-weight="bold" text-anchor="start"  stroke="#000" stroke-width="0.25">−</text>
<polygon points="800.5,278.5 800.5,298.5 821.5,288.5" fill="#ffffda" stroke="#000" stroke-width="1" shape-rendering="auto"/>
<text x="802" y="292.0" font-size="10" fill="#000" font-weight="bold" text-anchor="start"  stroke="#000" stroke-width="0.5">&gt;0</text>
<rect x="845.0" y="276.0" width="11" height="15" fill="#fff" stroke="#ff8000" stroke-width="2"/>
<text x="850.5" y="287" font-size="11" fill="#000" font-weight="normal" text-anchor="middle"  stroke="#000" stroke-width="0.1">1</text>
<rect x="845.0" y="318.0" width="11" height="15" fill="#fff" stroke="#ff8000" stroke-width="2"/>
<text x="850.5" y="329" font-size="11" fill="#000" font-weight="normal" text-anchor="middle"  stroke="#000" stroke-width="0.1">0</text>
<polygon points="844.5,294.5 844.5,314.5 865.5,304.5" fill="#ffffda" stroke="#000" stroke-width="1" shape-rendering="auto"/>
<text x="846" y="308.0" font-size="10" fill="#000" font-weight="bold" text-anchor="start"  stroke="#000" stroke-width="0.5">&lt;0</text>
<polygon points="873.5,290.5 873.5,316.5 900.5,303.5" fill="#ffffda" stroke="#000" stroke-width="1" shape-rendering="auto"/>
<path d="M876,294.5 L884,303.5 L876,312.5 M884,303.5 H893.5" fill="none" stroke="#000" stroke-width="2.4" shape-rendering="auto"/>
<text x="875" y="307.0" font-size="8.5" fill="#000" font-weight="bold" text-anchor="start"  stroke="#000" stroke-width="0.3">?</text>
<text x="884.5" y="301.3" font-size="5.5" fill="#000" font-weight="bold" text-anchor="start" >T</text>
<text x="884.5" y="309.7" font-size="5.5" fill="#000" font-weight="bold" text-anchor="start" >F</text>
<polygon points="1136.5,452.5 1136.5,478.5 1163.5,465.5" fill="#ffffda" stroke="#000" stroke-width="1" shape-rendering="auto"/>
<path d="M1139,456.5 L1147,465.5 L1139,474.5 M1147,465.5 H1156.5" fill="none" stroke="#000" stroke-width="2.4" shape-rendering="auto"/>
<text x="1138" y="469.0" font-size="8.5" fill="#000" font-weight="bold" text-anchor="start"  stroke="#000" stroke-width="0.3">?</text>
<text x="1147.5" y="463.3" font-size="5.5" fill="#000" font-weight="bold" text-anchor="start" >T</text>
<text x="1147.5" y="471.7" font-size="5.5" fill="#000" font-weight="bold" text-anchor="start" >F</text>
<rect x="135.0" y="461.0" width="14" height="10" fill="#fff2b8" stroke="#ff8000" stroke-width="2"/>
<polygon points="137.5,463 147,463 142.2,468.5" fill="#ff8000" shape-rendering="auto"/>
<rect x="1032.0" y="461.0" width="14" height="10" fill="#fff2b8" stroke="#ff8000" stroke-width="2"/>
<polygon points="1034.5,469 1044,469 1039.2,463.5" fill="#ff8000" shape-rendering="auto"/>
<rect x="113.0" y="459.0" width="15" height="15" fill="#fff" stroke="#ff8000" stroke-width="2"/>
<text x="114.5" y="470" font-size="11" fill="#000" font-weight="normal" text-anchor="start"  stroke="#000" stroke-width="0.1">-1</text>
<text x="112.5" y="455" font-size="11" fill="#000" font-weight="normal" text-anchor="start"  stroke="#000" stroke-width="0.1">t</text>
<polygon points="983.5,451.5 983.5,471.5 1004.5,461.5" fill="#ffffda" stroke="#000" stroke-width="1" shape-rendering="auto"/>
<text x="986.5" y="465.0" font-size="10" fill="#000" font-weight="bold" text-anchor="start"  stroke="#000" stroke-width="0.5">×</text>
<polygon points="1088.5,433.5 1088.5,453.5 1109.5,443.5" fill="#ffffda" stroke="#000" stroke-width="1" shape-rendering="auto"/>
<text x="1090" y="447.0" font-size="10" fill="#000" font-weight="bold" text-anchor="start"  stroke="#000" stroke-width="0.5">≥0</text>
<polygon points="1090.5,477.5 1090.5,497.5 1111.5,487.5" fill="#ffffda" stroke="#000" stroke-width="1" shape-rendering="auto"/>
<text x="1092.5" y="491.0" font-size="10" fill="#000" font-weight="bold" text-anchor="start"  stroke="#000" stroke-width="0.5">&gt;0</text>
<rect x="1086.5" y="377.5" width="116" height="40" fill="#ffffda" stroke="#000" stroke-width="1"/>
<text x="1088" y="389" font-size="11" fill="#000" font-weight="normal" text-anchor="start" textLength="88" lengthAdjust="spacingAndGlyphs"  stroke="#000" stroke-width="0.1">+1, if A in polygon</text>
<text x="1091" y="402" font-size="11" fill="#000" font-weight="normal" text-anchor="start" textLength="108" lengthAdjust="spacingAndGlyphs"  stroke="#000" stroke-width="0.1">-1, if A NOT in polygon</text>
<text x="1094" y="415" font-size="11" fill="#000" font-weight="normal" text-anchor="start" textLength="87.5" lengthAdjust="spacingAndGlyphs"  stroke="#000" stroke-width="0.1">0, if A ON polygon</text>
<path d="M1086,417.5 L1056,456" stroke="#000" stroke-width="1" shape-rendering="auto"/>
<polygon points="1053,460 1057.5,448 1064,454.5" fill="#000" shape-rendering="auto"/>
<rect x="5.0" y="185.0" width="30" height="14" fill="#fff" stroke="#ff8000" stroke-width="2"/>
<rect x="7.5" y="187.5" width="25" height="9" fill="#fff" stroke="#ff8000" stroke-width="1"/>
<rect x="26" y="187" width="7" height="10" fill="#ffd9b0" />
<polygon points="31,188.5 31,195.5 34.5,192" fill="#000" shape-rendering="auto"/>
<text x="19" y="195" font-size="8.5" fill="#ff8000" font-weight="bold" text-anchor="middle" textLength="15.5" lengthAdjust="spacingAndGlyphs"  stroke="#ff8000" stroke-width="0.4">DBL</text>
<text x="5" y="181" font-size="11" fill="#000" font-weight="normal" text-anchor="start" textLength="11.5" lengthAdjust="spacingAndGlyphs"  stroke="#000" stroke-width="0.1">Ya</text>
<rect x="5.0" y="223.0" width="30" height="14" fill="#fff" stroke="#ff8000" stroke-width="2"/>
<rect x="26" y="225" width="7" height="10" fill="#ffd9b0" />
<polygon points="31,226.5 31,233.5 34.5,230" fill="#000" shape-rendering="auto"/>
<path d="M11.5,225.5 H9.5 V234.5 H11.5" fill="none" stroke="#ff8000"/>
<path d="M29.5,225.5 H31.5 V234.5 H29.5" fill="none" stroke="#ffb060"/>
<text x="19.5" y="233" font-size="8.5" fill="#ff8000" font-weight="bold" text-anchor="middle" textLength="15.5" lengthAdjust="spacingAndGlyphs"  stroke="#ff8000" stroke-width="0.4">DBL</text>
<text x="5" y="219" font-size="11" fill="#000" font-weight="normal" text-anchor="start" textLength="11.5" lengthAdjust="spacingAndGlyphs"  stroke="#000" stroke-width="0.1">Yn</text>
<rect x="5.0" y="333.0" width="30" height="14" fill="#fff" stroke="#ff8000" stroke-width="2"/>
<rect x="26" y="335" width="7" height="10" fill="#ffd9b0" />
<polygon points="31,336.5 31,343.5 34.5,340" fill="#000" shape-rendering="auto"/>
<path d="M11.5,335.5 H9.5 V344.5 H11.5" fill="none" stroke="#ff8000"/>
<path d="M29.5,335.5 H31.5 V344.5 H29.5" fill="none" stroke="#ffb060"/>
<text x="19.5" y="343" font-size="8.5" fill="#ff8000" font-weight="bold" text-anchor="middle" textLength="15.5" lengthAdjust="spacingAndGlyphs"  stroke="#ff8000" stroke-width="0.4">DBL</text>
<text x="5" y="329" font-size="11" fill="#000" font-weight="normal" text-anchor="start" textLength="11.5" lengthAdjust="spacingAndGlyphs"  stroke="#000" stroke-width="0.1">Xn</text>
<rect x="5.0" y="388.0" width="30" height="14" fill="#fff" stroke="#ff8000" stroke-width="2"/>
<rect x="7.5" y="390.5" width="25" height="9" fill="#fff" stroke="#ff8000" stroke-width="1"/>
<rect x="26" y="390" width="7" height="10" fill="#ffd9b0" />
<polygon points="31,391.5 31,398.5 34.5,395" fill="#000" shape-rendering="auto"/>
<text x="19" y="398" font-size="8.5" fill="#ff8000" font-weight="bold" text-anchor="middle" textLength="15.5" lengthAdjust="spacingAndGlyphs"  stroke="#ff8000" stroke-width="0.4">DBL</text>
<text x="5" y="384" font-size="11" fill="#000" font-weight="normal" text-anchor="start" textLength="11.5" lengthAdjust="spacingAndGlyphs"  stroke="#000" stroke-width="0.1">Xa</text>
<rect x="5.0" y="524.0" width="30" height="14" fill="#fff" stroke="#007f00" stroke-width="2"/>
<rect x="7.5" y="526.5" width="25" height="9" fill="#fff" stroke="#007f00" stroke-width="1"/>
<text x="14" y="534" font-size="7.5" fill="#007f00" font-weight="bold" text-anchor="start" letter-spacing="2.2" stroke="#007f00" stroke-width="0.5">TF</text>
<rect x="26" y="525" width="8" height="12" fill="#b4d8b4" fill-opacity="0.8"/>
<polygon points="31,527.5 31,534.5 34.3,531" fill="#000" shape-rendering="auto"/>
<text x="5" y="519.5" font-size="11" fill="#000" font-weight="normal" text-anchor="start" textLength="138" lengthAdjust="spacingAndGlyphs"  stroke="#000" stroke-width="0.1">including polygon border? (F)</text>
<rect x="1178.5" y="457.5" width="31" height="15" fill="#fff" stroke="#007f00" stroke-width="1"/>
<rect x="1182.0" y="461.0" width="25" height="9" fill="#fff" stroke="#007f00" stroke-width="2"/>
<rect x="1181" y="460" width="7" height="11" fill="#b4d8b4" fill-opacity="0.8"/>
<polygon points="1182,461.5 1182,468.5 1185.5,465" fill="#000" shape-rendering="auto"/>
<text x="1189.5" y="468" font-size="7.5" fill="#007f00" font-weight="bold" text-anchor="start" letter-spacing="2.2" stroke="#007f00" stroke-width="0.5">TF</text>
<text x="1179" y="454" font-size="11" fill="#000" font-weight="normal" text-anchor="start" textLength="80" lengthAdjust="spacingAndGlyphs"  stroke="#000" stroke-width="0.1">point in polygon?</text>
</svg>
</body></html>
